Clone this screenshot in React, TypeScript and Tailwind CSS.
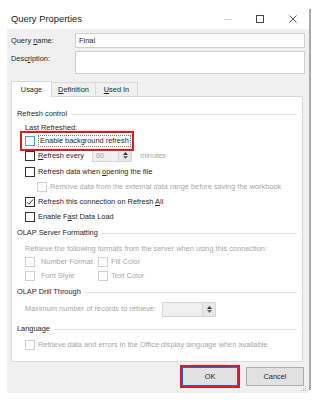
import React from 'react';

const font = "font-['Segoe_UI','Liberation_Sans',sans-serif]";

function Box({ checked, disabled, focus }: { checked?: boolean; disabled?: boolean; focus?: boolean }) {
  const border = focus ? 'border-[#5a9ad8]' : disabled ? 'border-[#cfcfcf]' : 'border-[#333333]';
  return (
    <span className={`w-[10px] h-[10px] shrink-0 border bg-white flex items-center justify-center ${border}`}>
      {checked && (
        <svg width="8" height="8" viewBox="0 0 8 8">
          <path d="M1 4.2 L3 6.2 L7 1.5" fill="none" stroke="#222" strokeWidth="0.9" />
        </svg>
      )}
    </span>
  );
}

function Check({
  label,
  checked,
  disabled,
  h,
  indent = 'pl-[8px]',
}: {
  label: React.ReactNode;
  checked?: boolean;
  disabled?: boolean;
  h: string;
  indent?: string;
}) {
  return (
    <div className={`flex items-center gap-[3px] whitespace-nowrap ${h} ${indent} ${disabled ? 'text-[#a6a6a6]' : ''}`}>
      <Box checked={checked} disabled={disabled} />
      <span>{label}</span>
    </div>
  );
}

function Group({ title, h }: { title: string; h: string }) {
  return (
    <div className={`flex items-center gap-[4px] ${h}`}>
      <span>{title}</span>
      <span className="flex-1 border-t border-[#e3e3e3]" />
    </div>
  );
}

function Spinner() {
  return (
    <span className="w-[13px] h-full flex flex-col items-center justify-center gap-[1px] bg-[#e8e8e8] border-l border-[#d6d6d6]">
      <svg width="5" height="3" viewBox="0 0 5 3">
        <path d="M0 3 L2.5 0 L5 3 Z" fill="#333" />
      </svg>
      <svg width="5" height="3" viewBox="0 0 5 3">
        <path d="M0 0 L2.5 3 L5 0 Z" fill="#666" />
      </svg>
    </span>
  );
}

export default function App() {
  return (
    <div className={`w-[318px] h-[400px] bg-white pl-[7px] pt-[9px] text-[7.4px] text-[#262626] ${font}`}>
      <div className="w-[304px] h-[381px] border-r-2 border-[#a9a9a9] flex flex-col">
        {/* title bar */}
        <div className="h-[20px] flex items-center pl-[4px] shrink-0">
          <span className="text-[9.4px] text-[#222]">Query Properties</span>
          <span className="ml-auto w-[8px] border-t border-[#d0d0d0] mr-[24px]" />
          <span className="w-[8px] h-[8px] border border-[#444] mr-[25px]" />
          <svg width="8" height="8" viewBox="0 0 8 8" className="mr-[12px]">
            <path d="M0.5 0.5 L7.5 7.5 M7.5 0.5 L0.5 7.5" stroke="#444" strokeWidth="0.9" />
          </svg>
        </div>

        {/* body */}
        <div className="flex-1 bg-[#f0f0f0] pl-[4px] pr-[4px] pt-[4px] flex flex-col">
          <div className="flex items-center h-[15px]">
            <span className="w-[64px]">
              Query <span className="underline">n</span>ame:
            </span>
            <div className="flex-1 h-full bg-white border border-[#cfcfcf] flex items-center pl-[3px]">Final</div>
          </div>
          <div className="flex items-start h-[23px] mt-[3px]">
            <span className="w-[64px] pt-[2px]">
              Desc<span className="underline">r</span>iption:
            </span>
            <div className="flex-1 h-full bg-white border border-[#cfcfcf]" />
          </div>

          {/* tabs */}
          <div className="flex items-end h-[15px] mt-[7px] mr-[2px] relative z-10">
            <div className="w-[41px] h-[16px] -mb-[1px] bg-white border border-b-0 border-[#d9d9d9] flex items-center justify-center">
              Usage
            </div>
            <div className="w-[44px] h-[14px] border border-l-0 border-b-0 border-[#d9d9d9] flex items-center justify-center">
              <span>
                <span className="underline">D</span>efinition
              </span>
            </div>
            <div className="w-[42px] h-[14px] border border-l-0 border-b-0 border-[#d9d9d9] flex items-center justify-center">
              <span>
                <span className="underline">U</span>sed In
              </span>
            </div>
          </div>

          {/* panel */}
          <div className="h-[266px] mr-[2px] bg-white border border-[#d9d9d9] px-[5px] pt-[10px] flex flex-col">
            <Group title="Refresh control" h="h-[14px]" />
            <div className="h-[13px] flex items-center pl-[8px]">Last Refreshed:</div>
            <div className="h-[13px] flex items-center pl-[8px]">
              <div className="relative flex items-center gap-[3px]">
                <Box focus />
                <span className="border border-dotted border-[#777] px-[1px] leading-[10px]">Enable background refresh</span>
                <span className="absolute -left-[5px] -top-[4px] -right-[3px] -bottom-[4px] border-2 border-[#e8141c]" />
              </div>
            </div>
            <div className="h-[17px] flex items-center gap-[3px] pl-[8px] whitespace-nowrap">
              <Box />
              <span className="w-[51px]">
                <span className="underline">R</span>efresh every
              </span>
              <div className="w-[40px] h-[12px] bg-[#f0f0f0] border border-[#d6d6d6] flex items-center text-[#a6a6a6]">
                <span className="flex-1 pl-[3px]">60</span>
                <Spinner />
              </div>
              <span className="ml-[5px] text-[#a6a6a6]">minutes</span>
            </div>
            <Check
              h="h-[16px]"
              label={
                <>
                  Refresh data when <span className="underline">o</span>pening the file
                </>
              }
            />
            <Check
              h="h-[14px]"
              indent="pl-[20px]"
              disabled
              label="Remove data from the external data range before saving the workbook"
            />
            <Check
              h="h-[15px]"
              checked
              label={
                <>
                  Refresh this connection on Refresh <span className="underline">A</span>ll
                </>
              }
            />
            <Check
              h="h-[15px]"
              label={
                <>
                  Enable F<span className="underline">a</span>st Data Load
                </>
              }
            />
            <Group title="OLAP Server Formatting" h="h-[18px]" />
            <div className="h-[13px] flex items-center pl-[8px] text-[#a6a6a6] whitespace-nowrap">
              Retrieve the following formats from the server when using this connection:
            </div>
            <div className="h-[14px] flex items-center pl-[8px] text-[#a6a6a6]">
              <span className="w-[73px] flex items-center gap-[6px]">
                <Box disabled />
                Number Format
              </span>
              <span className="flex items-center gap-[3px]">
                <Box disabled />
                Fill Color
              </span>
            </div>
            <div className="h-[14px] flex items-center pl-[8px] text-[#a6a6a6]">
              <span className="w-[73px] flex items-center gap-[6px]">
                <Box disabled />
                Font Style
              </span>
              <span className="flex items-center gap-[3px]">
                <Box disabled />
                Text Color
              </span>
            </div>
            <Group title="OLAP Drill Through" h="h-[18px]" />
            <div className="h-[16px] flex items-center pl-[8px] text-[#a6a6a6] whitespace-nowrap">
              <span className="w-[137px]">Maximum number of records to retrieve:</span>
              <div className="w-[54px] h-[15px] bg-[#f0f0f0] border border-[#d6d6d6] flex justify-end">
                <Spinner />
              </div>
            </div>
            <Group title="Language" h="h-[16px] mt-[4px]" />
            <Check
              h="h-[16px]"
              disabled
              label="Retrieve data and errors in the Office display language when available"
            />
          </div>

          {/* buttons */}
          <div className="flex justify-end gap-[8px] mt-[5px] mr-[1px]">
            <div className="relative">
              <div className="w-[56px] h-[19px] bg-[#e1e1e1] border border-[#0078d7] flex items-center justify-center">OK</div>
              <span className="absolute -inset-[2px] border-2 border-[#e8141c]" />
            </div>
            <div className="w-[58px] h-[19px] bg-[#e1e1e1] border border-[#adadad] flex items-center justify-center">Cancel</div>
          </div>
          <div className="flex justify-end mt-auto -mr-[2px] pb-[1px]">
            <svg width="6" height="6" viewBox="0 0 6 6">
              <rect x="4" y="0" width="1" height="1" fill="#b0b0b0" />
              <rect x="2" y="2" width="1" height="1" fill="#b0b0b0" />
              <rect x="4" y="2" width="1" height="1" fill="#b0b0b0" />
              <rect x="0" y="4" width="1" height="1" fill="#b0b0b0" />
              <rect x="2" y="4" width="1" height="1" fill="#b0b0b0" />
              <rect x="4" y="4" width="1" height="1" fill="#b0b0b0" />
            </svg>
          </div>
        </div>
      </div>
    </div>
  );
}
